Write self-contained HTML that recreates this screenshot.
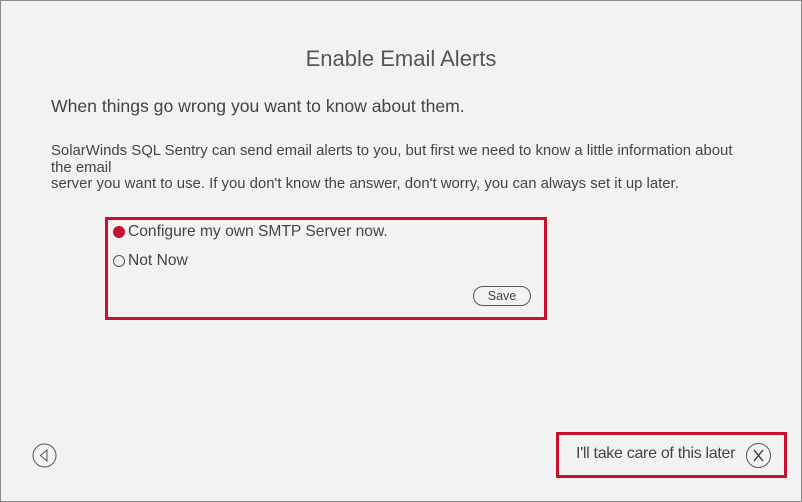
<!DOCTYPE html>
<html><head><style>
html,body{margin:0;padding:0}
body{width:802px;height:502px;position:relative;background:#f2f2f2;font-family:"Liberation Sans",sans-serif;color:#444;overflow:hidden}
.frame{position:absolute;left:0;top:0;width:800px;height:500px;border:1px solid #8a8a8a}
.t{position:absolute;white-space:nowrap}
.box{position:absolute;border:3px solid #c8102e;box-sizing:border-box}
</style></head><body>
<div class="frame"></div>
<div class="t" style="left:0;width:802px;text-align:center;top:46px;font-size:22px;color:#555">Enable Email Alerts</div>
<div class="t" style="left:51px;top:96px;font-size:17.6px;color:#444">When things go wrong you want to know about them.</div>
<div class="t" style="left:51px;top:143px;font-size:14.9px;line-height:16.5px;color:#444">SolarWinds SQL Sentry can send email alerts to you, but first we need to know a little information about<br>the email<br>server you want to use. If you don't know the answer, don't worry, you can always set it up later.</div>
<div class="box" style="left:105px;top:217px;width:442px;height:103px"></div>
<div style="position:absolute;left:113px;top:226px;width:12px;height:12px;border-radius:50%;background:#c8102e"></div>
<div class="t" style="left:128px;top:223px;font-size:15.6px;color:#444">Configure my own SMTP Server now.</div>
<div style="position:absolute;left:113px;top:255px;width:10px;height:10px;border-radius:50%;border:1px solid #555"></div>
<div class="t" style="left:128px;top:252px;font-size:15.6px;color:#444">Not Now</div>
<div style="position:absolute;left:473px;top:286px;width:58px;height:20px;border:1px solid #555;border-radius:10px;box-sizing:border-box;text-align:center;font-size:12.5px;line-height:18px;color:#444">Save</div>
<svg style="position:absolute;left:32px;top:443px" width="25" height="25" viewBox="0 0 25 25"><circle cx="12.5" cy="12.5" r="11.5" fill="none" stroke="#555" stroke-width="1"/><path d="M15 7 L8.5 12.5 L15 18 Z" fill="none" stroke="#555" stroke-width="1"/></svg>
<div class="box" style="left:556px;top:432px;width:231px;height:46px"></div>
<div class="t" style="left:576px;top:445px;font-size:16px;color:#444;letter-spacing:-0.3px">I'll take care of this later</div>
<svg style="position:absolute;left:745px;top:442px" width="27" height="27" viewBox="0 0 27 27"><circle cx="13.5" cy="13.5" r="12" fill="none" stroke="#555" stroke-width="1"/><path d="M9 8 L18 19 M18 8 L9 19" stroke="#444" stroke-width="1.4"/></svg>
</body></html>
